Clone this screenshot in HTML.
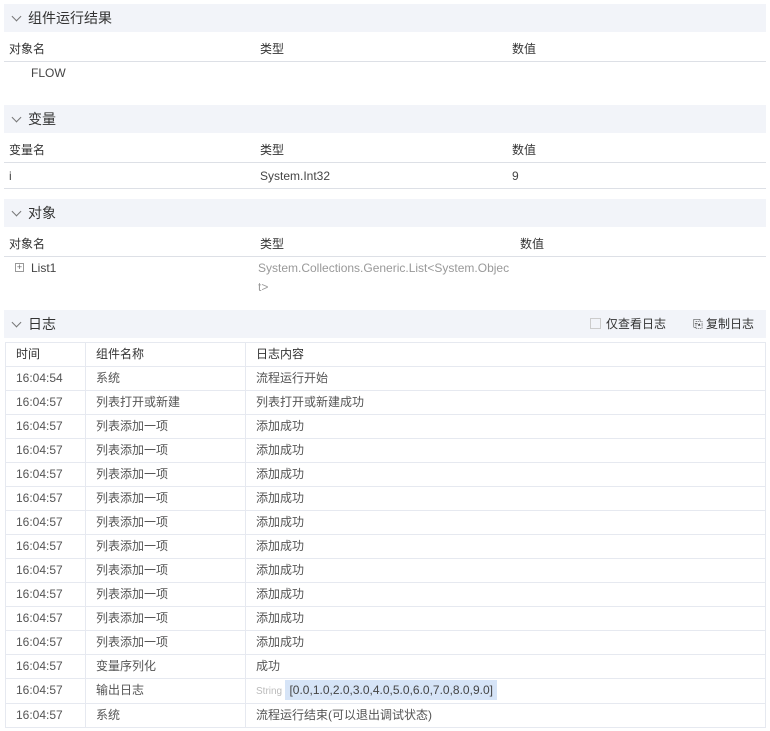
<!DOCTYPE html>
<html><head><meta charset="utf-8"><style>
*{margin:0;padding:0;box-sizing:border-box}
body{width:770px;height:731px;background:#fff;font-family:"Liberation Sans","Noto Sans CJK SC",sans-serif;font-size:12px;color:#333;position:relative;overflow:hidden}
.sec{position:absolute;left:4px;right:4px;height:28px;background:#f2f4f9;font-size:14px;line-height:28px;padding-left:24px;color:#333}
.sec:before{content:"";position:absolute;left:9px;top:9px;width:6px;height:6px;border-right:1px solid #777;border-bottom:1px solid #777;transform:rotate(45deg)}
.th{position:absolute;left:4px;right:4px;height:26px;border-bottom:1px solid #dde0e6;line-height:26px}
.th span,.row span{position:absolute;top:0}
.row{position:absolute;left:4px;right:4px;height:24px;line-height:24px}
.row span{color:#444}
table{position:absolute;left:5px;top:342px;width:761px;border-collapse:collapse}
td{height:24px;border:1px solid #e6e9f0;padding-left:10px;color:#555;white-space:nowrap;line-height:22px;vertical-align:top}
tr:first-child td{color:#333}
.hl{background:#d6e4f7;padding:3px 4px;color:#444}
</style></head><body>
<div class="sec" style="top:4px">组件运行结果</div>
<div class="th" style="top:36px"><span style="left:5px">对象名</span><span style="left:256px">类型</span><span style="left:508px">数值</span></div>
<div class="row" style="top:61px"><span style="left:27px">FLOW</span></div>
<div class="sec" style="top:105px">变量</div>
<div class="th" style="top:137px"><span style="left:5px">变量名</span><span style="left:256px">类型</span><span style="left:508px">数值</span></div>
<div class="row" style="top:164px;border-bottom:1px solid #dde0e6;height:25px"><span style="left:5px">i</span><span style="left:256px">System.Int32</span><span style="left:508px">9</span></div>
<div class="sec" style="top:199px">对象</div>
<div class="th" style="top:231px"><span style="left:5px">对象名</span><span style="left:256px">类型</span><span style="left:516px">数值</span></div>
<div class="row" style="top:256px"><span style="left:11px;top:7px;width:9px;height:9px;border:1px solid #999;font-size:9px;line-height:7px;text-align:center;color:#666">+</span><span style="left:27px">List1</span><span style="left:254px;color:#999">System.Collections.Generic.List&lt;System.Objec</span></div>
<div class="row" style="top:275px"><span style="left:254px;color:#999">t&gt;</span></div>
<div class="sec" style="top:310px">日志<span style="position:absolute;right:100px;font-size:12px;color:#333"><i style="display:inline-block;width:11px;height:11px;border:1px solid #ccc;vertical-align:-1px;margin-right:5px"></i>仅查看日志</span><span style="position:absolute;right:12px;font-size:12px;color:#333">⎘ 复制日志</span></div>
<table>
<tr><td style="width:80px">时间</td><td style="width:160px">组件名称</td><td>日志内容</td></tr>
<tr><td>16:04:54</td><td>系统</td><td>流程运行开始</td></tr>
<tr><td>16:04:57</td><td>列表打开或新建</td><td>列表打开或新建成功</td></tr>
<tr><td>16:04:57</td><td>列表添加一项</td><td>添加成功</td></tr>
<tr><td>16:04:57</td><td>列表添加一项</td><td>添加成功</td></tr>
<tr><td>16:04:57</td><td>列表添加一项</td><td>添加成功</td></tr>
<tr><td>16:04:57</td><td>列表添加一项</td><td>添加成功</td></tr>
<tr><td>16:04:57</td><td>列表添加一项</td><td>添加成功</td></tr>
<tr><td>16:04:57</td><td>列表添加一项</td><td>添加成功</td></tr>
<tr><td>16:04:57</td><td>列表添加一项</td><td>添加成功</td></tr>
<tr><td>16:04:57</td><td>列表添加一项</td><td>添加成功</td></tr>
<tr><td>16:04:57</td><td>列表添加一项</td><td>添加成功</td></tr>
<tr><td>16:04:57</td><td>列表添加一项</td><td>添加成功</td></tr>
<tr><td>16:04:57</td><td>变量序列化</td><td>成功</td></tr>
<tr><td>16:04:57</td><td>输出日志</td><td><span style="color:#bbb;font-size:10px">String</span> <span class="hl">[0.0,1.0,2.0,3.0,4.0,5.0,6.0,7.0,8.0,9.0]</span></td></tr>
<tr><td>16:04:57</td><td>系统</td><td>流程运行结束(可以退出调试状态)</td></tr>
</table>
</body></html>
